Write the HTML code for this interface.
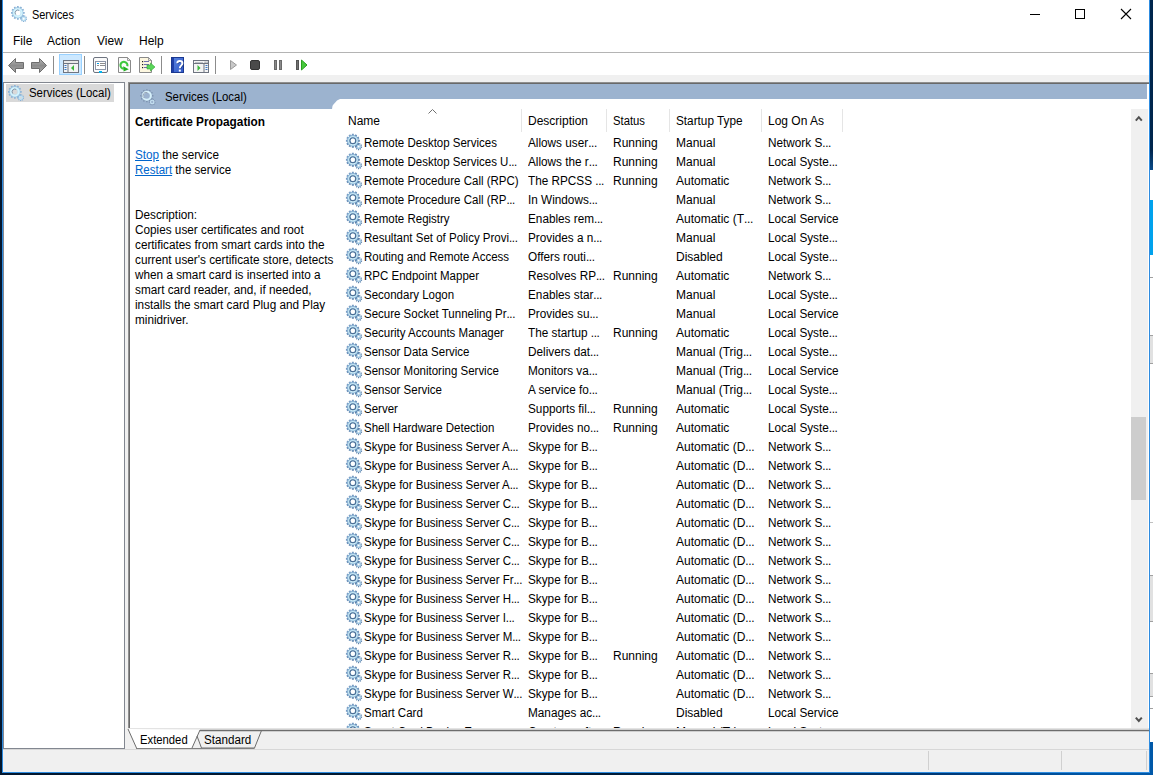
<!DOCTYPE html>
<html><head><meta charset="utf-8">
<style>
*{margin:0;padding:0;box-sizing:border-box}
html,body{width:1153px;height:775px;overflow:hidden;background:#fff;font-family:"Liberation Sans",sans-serif;color:#000}
.a{position:absolute}
.t{position:absolute;white-space:nowrap;font-size:12px;line-height:14px;transform-origin:0 0}
.row{position:absolute;left:0;width:1130px;height:19px}
.row .c{position:absolute;top:3px;font-size:12px;line-height:14px;white-space:nowrap;transform:scaleX(.95);transform-origin:0 0}
.row .c.n{transform:scaleX(.958)}
.row .c.d{transform:scaleX(.98)}
.row .c.s,.row .c.u{transform:none}
.row .c.l{transform:scaleX(.98)}
.gi{position:absolute;top:1px}
.row i{font-style:normal;letter-spacing:-0.4px}
svg{display:block;overflow:visible}
</style></head><body>
<svg width="0" height="0" style="position:absolute">
<defs>
<radialGradient id="gg" cx="0.5" cy="0.5" r="0.5">
<stop offset="0.45" stop-color="#a0cbe8"/><stop offset="0.7" stop-color="#d4f3fd"/><stop offset="1" stop-color="#89b4d6"/>
</radialGradient>
<linearGradient id="gt" x1="0" y1="0" x2="1" y2="1"><stop offset="0" stop-color="#86aad0"/><stop offset="1" stop-color="#48709c"/></linearGradient>
<radialGradient id="gp" cx="0.5" cy="0.5" r="0.5">
<stop offset="0.5" stop-color="#bde4f6"/><stop offset="0.75" stop-color="#d8f6fe"/><stop offset="1" stop-color="#a6d0ea"/>
</radialGradient>
<g id="gear">
<path d="M15.20,12.56 L16.20,12.69 L15.95,13.92 L14.98,13.65 L14.62,14.24 L15.30,14.98 L14.32,15.76 L13.75,14.93 L13.09,15.15 L13.13,16.16 L11.88,16.13 L11.98,15.12 L11.34,14.87 L10.72,15.67 L9.78,14.84 L10.50,14.13 L10.17,13.53 L9.19,13.74 L9.00,12.51 L10.01,12.43 L10.14,11.75 L9.25,11.28 L9.90,10.22 L10.73,10.80 L11.26,10.37 L10.88,9.44 L12.07,9.04 L12.32,10.01 L13.01,10.03 L13.32,9.07 L14.48,9.53 L14.05,10.44 L14.56,10.90 L15.42,10.36 L16.01,11.46 L15.10,11.88Z" fill="#5f83ab"/>
<circle cx="12.6" cy="12.6" r="2.5" fill="#a9cde6"/>
<circle cx="12.6" cy="12.6" r="1.0" fill="#fff"/>
<path d="M12.36,5.82 L13.78,5.80 L13.78,7.80 L12.36,7.78 L12.11,8.71 L13.35,9.39 L12.35,11.13 L11.14,10.40 L10.45,11.09 L11.18,12.30 L9.44,13.30 L8.76,12.06 L7.83,12.31 L7.85,13.73 L5.85,13.73 L5.87,12.31 L4.94,12.06 L4.26,13.30 L2.52,12.30 L3.25,11.09 L2.56,10.40 L1.35,11.13 L0.35,9.39 L1.59,8.71 L1.34,7.78 L-0.08,7.80 L-0.08,5.80 L1.34,5.82 L1.59,4.89 L0.35,4.21 L1.35,2.47 L2.56,3.20 L3.25,2.51 L2.52,1.30 L4.26,0.30 L4.94,1.54 L5.87,1.29 L5.85,-0.13 L7.85,-0.13 L7.83,1.29 L8.76,1.54 L9.44,0.30 L11.18,1.30 L10.45,2.51 L11.14,3.20 L12.35,2.47 L13.35,4.21 L12.11,4.89Z" fill="url(#gt)"/>
<circle cx="6.85" cy="6.8" r="5.6" fill="url(#gg)"/>
<circle cx="6.85" cy="6.8" r="2.9" fill="none" stroke="#4d7097" stroke-width="1.3"/>
<circle cx="6.85" cy="6.8" r="2.2" fill="#fff"/>
</g>
<g id="gearL">
<path d="M15.30,12.66 L16.10,12.79 L15.86,13.94 L15.08,13.75 L14.72,14.34 L15.25,14.95 L14.32,15.69 L13.85,15.03 L13.19,15.25 L13.20,16.06 L12.02,16.03 L12.08,15.22 L11.44,14.97 L10.93,15.60 L10.04,14.82 L10.60,14.23 L10.27,13.63 L9.48,13.78 L9.30,12.61 L10.11,12.53 L10.24,11.85 L9.54,11.46 L10.15,10.45 L10.83,10.90 L11.36,10.47 L11.08,9.71 L12.20,9.34 L12.42,10.11 L13.11,10.13 L13.38,9.37 L14.47,9.80 L14.15,10.54 L14.66,11.00 L15.36,10.58 L15.92,11.62 L15.20,11.98Z" fill="#86b0d6"/>
<circle cx="12.7" cy="12.7" r="2.4" fill="#c0e2f4"/>
<path d="M12.28,5.94 L13.70,5.94 L13.70,7.66 L12.28,7.66 L11.98,8.77 L13.21,9.47 L12.35,10.97 L11.12,10.26 L10.31,11.07 L11.02,12.30 L9.52,13.16 L8.82,11.93 L7.71,12.23 L7.71,13.65 L5.99,13.65 L5.99,12.23 L4.88,11.93 L4.18,13.16 L2.68,12.30 L3.39,11.07 L2.58,10.26 L1.35,10.97 L0.49,9.47 L1.72,8.77 L1.42,7.66 L0.00,7.66 L0.00,5.94 L1.42,5.94 L1.72,4.83 L0.49,4.13 L1.35,2.63 L2.58,3.34 L3.39,2.53 L2.68,1.30 L4.18,0.44 L4.88,1.67 L5.99,1.37 L5.99,-0.05 L7.71,-0.05 L7.71,1.37 L8.82,1.67 L9.52,0.44 L11.02,1.30 L10.31,2.53 L11.12,3.34 L12.35,2.63 L13.21,4.13 L11.98,4.83Z" fill="#8cb3d6"/>
<circle cx="6.85" cy="6.8" r="5.4" fill="url(#gp)"/>
</g>
</defs>
</svg>

<!-- window borders -->
<div class="a" style="left:0;top:0;width:2px;height:775px;background:#03172e"></div>
<div class="a" style="left:2px;top:0;width:1px;height:775px;background:#2e8ce0"></div>
<div class="a" style="left:1149px;top:0;width:1px;height:775px;background:#2e8ce0"></div>
<div class="a" style="left:1150px;top:0;width:3px;height:170px;background:linear-gradient(#00264d 0,#00264d 150px,#0a4a88 170px)"></div>
<div class="a" style="left:1150px;top:200px;width:3px;height:55px;background:#00a2ed"></div>
<div class="a" style="left:1150px;top:277px;width:3px;height:1px;background:#a0a0a0"></div>
<div class="a" style="left:1150px;top:335px;width:3px;height:29px;background:#e1e1e1;border-top:1px solid #a0a0a0;border-bottom:1px solid #a0a0a0"></div>
<div class="a" style="left:1150px;top:522px;width:3px;height:1px;background:#c0c0c0"></div>
<div class="a" style="left:1150px;top:575px;width:3px;height:47px;background:#e1e1e1;border-top:1px solid #a0a0a0;border-bottom:1px solid #a0a0a0"></div>
<div class="a" style="left:1150px;top:673px;width:3px;height:24px;background:#e1e1e1;border-top:1px solid #a0a0a0;border-bottom:1px solid #a0a0a0"></div>
<div class="a" style="left:1150px;top:708px;width:3px;height:1px;background:#a0a0a0"></div>
<div class="a" style="left:1150px;top:742px;width:3px;height:33px;background:#0a5aa5"></div>

<!-- title bar -->
<svg class="a" style="left:11px;top:6px" width="16" height="16"><use href="#gearL"/><circle cx="6.85" cy="6.8" r="2.6" fill="#fff"/><circle cx="12.7" cy="12.7" r="1.0" fill="#fff"/><path d="M4.78,8.54 A2.7,2.7 0 0 1 8.2,4.46" fill="none" stroke="#6a7486" stroke-width="0.7"/></svg>
<div class="t" style="left:32px;top:8px;transform:scaleX(.91)">Services</div>
<!-- caption buttons -->
<div class="a" style="left:1030px;top:14px;width:10px;height:1px;background:#000"></div>
<div class="a" style="left:1075px;top:9px;width:10px;height:10px;border:1px solid #000"></div>
<svg class="a" style="left:1121px;top:9px" width="10" height="10"><path d="M0,0L10,10M10,0L0,10" stroke="#000" stroke-width="1.1"/></svg>

<!-- menu -->
<div class="t" style="left:13px;top:34px">File</div>
<div class="t" style="left:47px;top:34px">Action</div>
<div class="t" style="left:97px;top:34px">View</div>
<div class="t" style="left:139px;top:34px">Help</div>
<div class="a" style="left:3px;top:52px;width:1146px;height:1px;background:#b4b4b4"></div>

<!-- toolbar -->
<svg class="a" style="left:0;top:53px" width="320" height="22">
<defs>
<linearGradient id="ag" x1="0" y1="0" x2="0" y2="1"><stop offset="0" stop-color="#b8b8b8"/><stop offset="0.5" stop-color="#8c8c8c"/><stop offset="1" stop-color="#a8a8a8"/></linearGradient>
<linearGradient id="hg" x1="0" y1="0" x2="1" y2="1"><stop offset="0" stop-color="#5b86e0"/><stop offset="1" stop-color="#2f57c8"/></linearGradient>
</defs>
<!-- back arrow -->
<path d="M8.5,12.5 L15.5,5.5 L15.5,9.5 L23.5,9.5 L23.5,15.5 L15.5,15.5 L15.5,19.5 Z" fill="url(#ag)" stroke="#6e6e6e" stroke-width="1" stroke-linejoin="round"/>
<!-- forward arrow -->
<path d="M46.5,12.5 L39.5,5.5 L39.5,9.5 L31.5,9.5 L31.5,15.5 L39.5,15.5 L39.5,19.5 Z" fill="url(#ag)" stroke="#6e6e6e" stroke-width="1" stroke-linejoin="round"/>
<rect x="53" y="3" width="1" height="18" fill="#8c8c8c"/>
<!-- highlighted button -->
<rect x="59.5" y="1.5" width="22" height="20" fill="#cce8ff" stroke="#99d1ff" stroke-width="1"/>
<rect x="63.5" y="7.5" width="15" height="12" fill="#f4f4f4" stroke="#6e7480" stroke-width="1"/>
<rect x="64" y="8" width="14" height="2" fill="#e8e8e8"/>
<rect x="64" y="10" width="14" height="1" fill="#6e7480"/>
<rect x="67.5" y="11" width="1" height="8" fill="#6e7480"/>
<rect x="64.5" y="12" width="2" height="1" fill="#3a78c8"/><rect x="64.5" y="14" width="2" height="1" fill="#3a78c8"/><rect x="64.5" y="16" width="2" height="1" fill="#3a78c8"/>
<path d="M74,12 L71,15 L74,18 Z" fill="#3cb83c"/>
<rect x="84" y="3" width="1" height="18" fill="#8c8c8c"/>
<!-- properties -->
<rect x="93.5" y="4.5" width="14" height="15" rx="1.5" fill="#fafafa" stroke="#6e7480" stroke-width="1"/>
<rect x="95.5" y="8.5" width="10" height="8" fill="#fff" stroke="#8d96a8" stroke-width="1"/>
<rect x="97" y="10" width="2" height="1" fill="#00a0e8"/><rect x="100" y="10" width="5" height="1" fill="#8d8d8d"/>
<rect x="97" y="12" width="2" height="1" fill="#8d8d8d"/><rect x="100" y="12" width="5" height="1" fill="#8d8d8d"/>
<rect x="99" y="18" width="3" height="2" fill="#00b4f0"/>
<!-- refresh -->
<path d="M118.5,4.5 L127.5,4.5 L130.5,7.5 L130.5,19.5 L118.5,19.5 Z" fill="#fbfbfb" stroke="#8a8a8a" stroke-width="1"/>
<path d="M127.5,7.5 L127.5,4.5 L130.5,7.5 Z" fill="#e8e8e8" stroke="#8a8a8a" stroke-width="0.8"/>
<path d="M127.3,13.3 A3.5,3.5 0 1 0 123.6,15.8" fill="none" stroke="#3ec83e" stroke-width="2.1"/>
<path d="M123.2,13.2 L128.8,16.2 L123.6,18.6 Z" fill="#22b022"/>
<!-- export list -->
<path d="M139.5,4.5 L148.5,4.5 L151.5,7.5 L151.5,19.5 L139.5,19.5 Z" fill="#fdf7e0" stroke="#8a8a8a" stroke-width="1"/>
<path d="M148.5,7.5 L148.5,4.5 L151.5,7.5 Z" fill="#e8e8e8" stroke="#8a8a8a" stroke-width="0.8"/>
<rect x="142" y="8" width="1.2" height="1.2" fill="#222"/><rect x="144" y="8" width="5" height="1" fill="#7070b0"/>
<rect x="142" y="11" width="1.2" height="1.2" fill="#222"/><rect x="144" y="11" width="5" height="1" fill="#7070b0"/>
<rect x="142" y="14" width="1.2" height="1.2" fill="#222"/><rect x="144" y="14" width="5" height="1" fill="#7070b0"/>
<path d="M147,12 L150.5,12 L150.5,10 L155,14 L150.5,18 L150.5,16 L147,16 Z" fill="#5ad65a" stroke="#34a834" stroke-width="0.6"/>
<rect x="161" y="3" width="1" height="18" fill="#8c8c8c"/>
<!-- help -->
<rect x="171" y="4" width="13" height="16" fill="url(#hg)"/>
<rect x="171" y="4" width="3" height="16" fill="#1f3fa8"/>
<rect x="171.5" y="4.5" width="12" height="15" fill="none" stroke="#1a3890" stroke-width="1"/>
<path d="M177.3,10.2 C177.3,7.2 182.4,7.2 182.4,10.2 C182.4,12.6 179.8,12.6 179.8,15.2" fill="none" stroke="#1d3c8a" stroke-width="1.9" transform="translate(0.6,0.5)"/><path d="M177.3,10.2 C177.3,7.2 182.4,7.2 182.4,10.2 C182.4,12.6 179.8,12.6 179.8,15.2" fill="none" stroke="#fff" stroke-width="1.9"/><rect x="178.8" y="16.6" width="2" height="2" fill="#fff"/>
<!-- action pane -->
<rect x="193.5" y="7.5" width="15" height="12" fill="#f4f4f4" stroke="#6e7480" stroke-width="1"/><rect x="195" y="9" width="8" height="0.8" fill="#b0b4bc"/><rect x="204.5" y="8.6" width="1.2" height="1.2" fill="#8a8f9a"/><rect x="206.5" y="8.6" width="1.2" height="1.2" fill="#8a8f9a"/>
<rect x="194" y="10" width="14" height="1" fill="#6e7480"/>
<rect x="203.5" y="11" width="1" height="8" fill="#6e7480"/>
<rect x="205.5" y="12" width="2" height="1" fill="#3a78c8"/><rect x="205.5" y="14" width="2" height="1" fill="#3a78c8"/><rect x="205.5" y="16" width="2" height="1" fill="#3a78c8"/>
<path d="M197.5,12 L200.5,15 L197.5,18 Z" fill="#3cb83c"/>
<rect x="215" y="3" width="1" height="18" fill="#8c8c8c"/>
<!-- play disabled -->
<path d="M230.5,7.5 L236.5,12 L230.5,16.5 Z" fill="#c8c8c8" stroke="#9a9a9a" stroke-width="1" stroke-linejoin="round"/>
<!-- stop -->
<rect x="250.5" y="7.5" width="9" height="9" rx="1.5" fill="#4a4a4a" stroke="#333" stroke-width="1"/>
<!-- pause -->
<rect x="274.5" y="7.5" width="2" height="9" fill="#8a8a8a" stroke="#6a6a6a" stroke-width="1"/>
<rect x="279.5" y="7.5" width="2" height="9" fill="#8a8a8a" stroke="#6a6a6a" stroke-width="1"/>
<!-- restart -->
<rect x="296.5" y="7.5" width="2" height="9" fill="#707070" stroke="#555" stroke-width="1"/>
<path d="M301.5,7 L307,12 L301.5,17 Z" fill="#46c83c" stroke="#2aa020" stroke-width="1" stroke-linejoin="round"/>
</svg>

<div class="a" style="left:3px;top:75px;width:1146px;height:7px;background:#f0f0f0"></div>

<!-- left pane -->
<div class="a" style="left:3px;top:82px;width:122px;height:667px;background:#fff;border:1px solid #828790"></div>
<div class="a" style="left:6px;top:84px;width:108px;height:18px;background:#d9d9d9"></div>
<svg class="a" style="left:8px;top:85px" width="16" height="16"><use href="#gearL"/><circle cx="6.85" cy="6.8" r="2.6" fill="#d9d9d9"/><circle cx="12.7" cy="12.7" r="1.0" fill="#d9d9d9"/><path d="M4.78,8.54 A2.7,2.7 0 0 1 8.2,4.46" fill="none" stroke="#6a7486" stroke-width="0.7"/></svg>
<div class="t" style="left:29px;top:86px;transform:scaleX(.95)">Services (Local)</div>
<div class="a" style="left:125px;top:82px;width:3px;height:667px;background:#f0f0f0"></div>

<!-- right pane -->
<div class="a" style="left:128px;top:82px;width:1021px;height:1px;background:#8f8f8f"></div>
<div class="a" style="left:128px;top:82px;width:1px;height:646px;background:#8f8f8f"></div>
<div class="a" style="left:129px;top:83px;width:1020px;height:1px;background:#696969"></div>
<div class="a" style="left:129px;top:83px;width:1px;height:645px;background:#696969"></div>
<div class="a" style="left:130px;top:84px;width:1017px;height:25px;background:#9cb3cf"></div>
<div class="a" style="left:332px;top:99px;width:815px;height:10px;background:#fff;clip-path:polygon(0 10px,0.5px 7px,1px 6px,5px 1.5px,8px 0,100% 0,100% 100%)"></div>
<svg class="a" style="left:140px;top:89px" width="16" height="16"><path d="M12.10,6.08 L13.41,6.11 L13.41,7.49 L12.10,7.52 L11.76,8.80 L12.88,9.48 L12.19,10.68 L11.04,10.05 L10.10,10.99 L10.73,12.14 L9.53,12.83 L8.85,11.71 L7.57,12.05 L7.54,13.36 L6.16,13.36 L6.13,12.05 L4.85,11.71 L4.17,12.83 L2.97,12.14 L3.60,10.99 L2.66,10.05 L1.51,10.68 L0.82,9.48 L1.94,8.80 L1.60,7.52 L0.29,7.49 L0.29,6.11 L1.60,6.08 L1.94,4.80 L0.82,4.12 L1.51,2.92 L2.66,3.55 L3.60,2.61 L2.97,1.46 L4.17,0.77 L4.85,1.89 L6.13,1.55 L6.16,0.24 L7.54,0.24 L7.57,1.55 L8.85,1.89 L9.53,0.77 L10.73,1.46 L10.10,2.61 L11.04,3.55 L12.19,2.92 L12.88,4.12 L11.76,4.80Z" fill="#7a90ad"/><circle cx="6.85" cy="6.8" r="5.3" fill="#9cb3cf"/><circle cx="6.85" cy="6.8" r="4.0" fill="none" stroke="#d6f0fa" stroke-width="2"/><path d="M4.6,9.2 A3,3 0 0 1 7.5,3.8" fill="none" stroke="#7a7f90" stroke-width="0.7"/><path d="M14.70,13.00 L15.60,13.15 L15.39,14.19 L14.50,13.97 L14.11,14.61 L14.71,15.30 L13.88,15.96 L13.34,15.22 L12.63,15.46 L12.65,16.37 L11.58,16.34 L11.64,15.44 L10.95,15.16 L10.38,15.87 L9.58,15.16 L10.21,14.51 L9.85,13.85 L8.96,14.02 L8.80,12.97 L9.70,12.88 L9.85,12.14 L9.06,11.70 L9.61,10.79 L10.37,11.30 L10.95,10.83 L10.63,9.99 L11.64,9.65 L11.89,10.52 L12.64,10.54 L12.93,9.68 L13.92,10.07 L13.56,10.90 L14.12,11.40 L14.90,10.93 L15.40,11.86 L14.59,12.26Z" fill="#7a90ad"/><circle cx="12.2" cy="13.0" r="2.5" fill="#9cb3cf"/><circle cx="12.2" cy="13.0" r="1.7" fill="none" stroke="#c6e2f2" stroke-width="1.1"/></svg>
<div class="t" style="left:165px;top:90px;transform:scaleX(.95)">Services (Local)</div>

<div class="t" style="left:135px;top:115px;font-weight:bold;transform:scaleX(.985)">Certificate Propagation</div>
<div class="t" style="left:135px;top:148px;transform:scaleX(.975)"><span style="color:#0066cc;text-decoration:underline">Stop</span> the service</div>
<div class="t" style="left:135px;top:163px;transform:scaleX(.96)"><span style="color:#0066cc;text-decoration:underline">Restart</span> the service</div>
<div class="t" style="left:135px;top:208px;line-height:15px;transform:scaleX(.98)">Description:<br>Copies user certificates and root<br>certificates from smart cards into the<br>current user's certificate store, detects<br>when a smart card is inserted into a<br>smart card reader, and, if needed,<br>installs the smart card Plug and Play<br>minidriver.</div>

<!-- list header -->
<div class="t" style="left:348px;top:114px">Name</div>
<svg class="a" style="left:428px;top:109px" width="9" height="5"><path d="M0.5,4.5L4.5,0.5L8.5,4.5" fill="none" stroke="#707070" stroke-width="1"/></svg>
<div class="a" style="left:521px;top:109px;width:1px;height:23px;background:#e5e5e5"></div>
<div class="t" style="left:528px;top:114px">Description</div>
<div class="a" style="left:606px;top:109px;width:1px;height:23px;background:#e5e5e5"></div>
<div class="t" style="left:613px;top:114px;transform:scaleX(.94)">Status</div>
<div class="a" style="left:669px;top:109px;width:1px;height:23px;background:#e5e5e5"></div>
<div class="t" style="left:676px;top:114px;transform:scaleX(.98)">Startup Type</div>
<div class="a" style="left:761px;top:109px;width:1px;height:23px;background:#e5e5e5"></div>
<div class="t" style="left:768px;top:114px">Log On As</div>
<div class="a" style="left:842px;top:109px;width:1px;height:23px;background:#e5e5e5"></div>

<!-- rows (clipped) -->
<div class="a" style="left:130px;top:132px;width:1001px;height:596px;overflow:hidden">
<div class="a" style="left:-130px;top:-132px;width:1153px;height:775px">
<div class="row" style="top:133px"><svg class="gi" style="left:346px" width="16" height="16"><use href="#gear"/></svg><span class="c n" style="left:364px">Remote Desktop Services</span><span class="c d" style="left:528px">Allows user<i>...</i></span><span class="c s" style="left:613px">Running</span><span class="c u" style="left:676px">Manual</span><span class="c l" style="left:768px">Network S<i>...</i></span></div>
<div class="row" style="top:152px"><svg class="gi" style="left:346px" width="16" height="16"><use href="#gear"/></svg><span class="c n" style="left:364px">Remote Desktop Services U<i>...</i></span><span class="c d" style="left:528px">Allows the r<i>...</i></span><span class="c s" style="left:613px">Running</span><span class="c u" style="left:676px">Manual</span><span class="c l" style="left:768px">Local Syste<i>...</i></span></div>
<div class="row" style="top:171px"><svg class="gi" style="left:346px" width="16" height="16"><use href="#gear"/></svg><span class="c n" style="left:364px">Remote Procedure Call (RPC)</span><span class="c d" style="left:528px">The RPCSS <i>...</i></span><span class="c s" style="left:613px">Running</span><span class="c u" style="left:676px">Automatic</span><span class="c l" style="left:768px">Network S<i>...</i></span></div>
<div class="row" style="top:190px"><svg class="gi" style="left:346px" width="16" height="16"><use href="#gear"/></svg><span class="c n" style="left:364px">Remote Procedure Call (RP<i>...</i></span><span class="c d" style="left:528px">In Windows<i>...</i></span><span class="c u" style="left:676px">Manual</span><span class="c l" style="left:768px">Network S<i>...</i></span></div>
<div class="row" style="top:209px"><svg class="gi" style="left:346px" width="16" height="16"><use href="#gear"/></svg><span class="c n" style="left:364px">Remote Registry</span><span class="c d" style="left:528px">Enables rem<i>...</i></span><span class="c u" style="left:676px">Automatic (T<i>...</i></span><span class="c l" style="left:768px">Local Service</span></div>
<div class="row" style="top:228px"><svg class="gi" style="left:346px" width="16" height="16"><use href="#gear"/></svg><span class="c n" style="left:364px">Resultant Set of Policy Provi<i>...</i></span><span class="c d" style="left:528px">Provides a n<i>...</i></span><span class="c u" style="left:676px">Manual</span><span class="c l" style="left:768px">Local Syste<i>...</i></span></div>
<div class="row" style="top:247px"><svg class="gi" style="left:346px" width="16" height="16"><use href="#gear"/></svg><span class="c n" style="left:364px">Routing and Remote Access</span><span class="c d" style="left:528px">Offers routi<i>...</i></span><span class="c u" style="left:676px">Disabled</span><span class="c l" style="left:768px">Local Syste<i>...</i></span></div>
<div class="row" style="top:266px"><svg class="gi" style="left:346px" width="16" height="16"><use href="#gear"/></svg><span class="c n" style="left:364px">RPC Endpoint Mapper</span><span class="c d" style="left:528px">Resolves RP<i>...</i></span><span class="c s" style="left:613px">Running</span><span class="c u" style="left:676px">Automatic</span><span class="c l" style="left:768px">Network S<i>...</i></span></div>
<div class="row" style="top:285px"><svg class="gi" style="left:346px" width="16" height="16"><use href="#gear"/></svg><span class="c n" style="left:364px">Secondary Logon</span><span class="c d" style="left:528px">Enables star<i>...</i></span><span class="c u" style="left:676px">Manual</span><span class="c l" style="left:768px">Local Syste<i>...</i></span></div>
<div class="row" style="top:304px"><svg class="gi" style="left:346px" width="16" height="16"><use href="#gear"/></svg><span class="c n" style="left:364px">Secure Socket Tunneling Pr<i>...</i></span><span class="c d" style="left:528px">Provides su<i>...</i></span><span class="c u" style="left:676px">Manual</span><span class="c l" style="left:768px">Local Service</span></div>
<div class="row" style="top:323px"><svg class="gi" style="left:346px" width="16" height="16"><use href="#gear"/></svg><span class="c n" style="left:364px">Security Accounts Manager</span><span class="c d" style="left:528px">The startup <i>...</i></span><span class="c s" style="left:613px">Running</span><span class="c u" style="left:676px">Automatic</span><span class="c l" style="left:768px">Local Syste<i>...</i></span></div>
<div class="row" style="top:342px"><svg class="gi" style="left:346px" width="16" height="16"><use href="#gear"/></svg><span class="c n" style="left:364px">Sensor Data Service</span><span class="c d" style="left:528px">Delivers dat<i>...</i></span><span class="c u" style="left:676px">Manual (Trig<i>...</i></span><span class="c l" style="left:768px">Local Syste<i>...</i></span></div>
<div class="row" style="top:361px"><svg class="gi" style="left:346px" width="16" height="16"><use href="#gear"/></svg><span class="c n" style="left:364px">Sensor Monitoring Service</span><span class="c d" style="left:528px">Monitors va<i>...</i></span><span class="c u" style="left:676px">Manual (Trig<i>...</i></span><span class="c l" style="left:768px">Local Service</span></div>
<div class="row" style="top:380px"><svg class="gi" style="left:346px" width="16" height="16"><use href="#gear"/></svg><span class="c n" style="left:364px">Sensor Service</span><span class="c d" style="left:528px">A service fo<i>...</i></span><span class="c u" style="left:676px">Manual (Trig<i>...</i></span><span class="c l" style="left:768px">Local Syste<i>...</i></span></div>
<div class="row" style="top:399px"><svg class="gi" style="left:346px" width="16" height="16"><use href="#gear"/></svg><span class="c n" style="left:364px">Server</span><span class="c d" style="left:528px">Supports fil<i>...</i></span><span class="c s" style="left:613px">Running</span><span class="c u" style="left:676px">Automatic</span><span class="c l" style="left:768px">Local Syste<i>...</i></span></div>
<div class="row" style="top:418px"><svg class="gi" style="left:346px" width="16" height="16"><use href="#gear"/></svg><span class="c n" style="left:364px">Shell Hardware Detection</span><span class="c d" style="left:528px">Provides no<i>...</i></span><span class="c s" style="left:613px">Running</span><span class="c u" style="left:676px">Automatic</span><span class="c l" style="left:768px">Local Syste<i>...</i></span></div>
<div class="row" style="top:437px"><svg class="gi" style="left:346px" width="16" height="16"><use href="#gear"/></svg><span class="c n" style="left:364px">Skype for Business Server A<i>...</i></span><span class="c d" style="left:528px">Skype for B<i>...</i></span><span class="c u" style="left:676px">Automatic (D<i>...</i></span><span class="c l" style="left:768px">Network S<i>...</i></span></div>
<div class="row" style="top:456px"><svg class="gi" style="left:346px" width="16" height="16"><use href="#gear"/></svg><span class="c n" style="left:364px">Skype for Business Server A<i>...</i></span><span class="c d" style="left:528px">Skype for B<i>...</i></span><span class="c u" style="left:676px">Automatic (D<i>...</i></span><span class="c l" style="left:768px">Network S<i>...</i></span></div>
<div class="row" style="top:475px"><svg class="gi" style="left:346px" width="16" height="16"><use href="#gear"/></svg><span class="c n" style="left:364px">Skype for Business Server A<i>...</i></span><span class="c d" style="left:528px">Skype for B<i>...</i></span><span class="c u" style="left:676px">Automatic (D<i>...</i></span><span class="c l" style="left:768px">Network S<i>...</i></span></div>
<div class="row" style="top:494px"><svg class="gi" style="left:346px" width="16" height="16"><use href="#gear"/></svg><span class="c n" style="left:364px">Skype for Business Server C<i>...</i></span><span class="c d" style="left:528px">Skype for B<i>...</i></span><span class="c u" style="left:676px">Automatic (D<i>...</i></span><span class="c l" style="left:768px">Network S<i>...</i></span></div>
<div class="row" style="top:513px"><svg class="gi" style="left:346px" width="16" height="16"><use href="#gear"/></svg><span class="c n" style="left:364px">Skype for Business Server C<i>...</i></span><span class="c d" style="left:528px">Skype for B<i>...</i></span><span class="c u" style="left:676px">Automatic (D<i>...</i></span><span class="c l" style="left:768px">Network S<i>...</i></span></div>
<div class="row" style="top:532px"><svg class="gi" style="left:346px" width="16" height="16"><use href="#gear"/></svg><span class="c n" style="left:364px">Skype for Business Server C<i>...</i></span><span class="c d" style="left:528px">Skype for B<i>...</i></span><span class="c u" style="left:676px">Automatic (D<i>...</i></span><span class="c l" style="left:768px">Network S<i>...</i></span></div>
<div class="row" style="top:551px"><svg class="gi" style="left:346px" width="16" height="16"><use href="#gear"/></svg><span class="c n" style="left:364px">Skype for Business Server C<i>...</i></span><span class="c d" style="left:528px">Skype for B<i>...</i></span><span class="c u" style="left:676px">Automatic (D<i>...</i></span><span class="c l" style="left:768px">Network S<i>...</i></span></div>
<div class="row" style="top:570px"><svg class="gi" style="left:346px" width="16" height="16"><use href="#gear"/></svg><span class="c n" style="left:364px">Skype for Business Server Fr<i>...</i></span><span class="c d" style="left:528px">Skype for B<i>...</i></span><span class="c u" style="left:676px">Automatic (D<i>...</i></span><span class="c l" style="left:768px">Network S<i>...</i></span></div>
<div class="row" style="top:589px"><svg class="gi" style="left:346px" width="16" height="16"><use href="#gear"/></svg><span class="c n" style="left:364px">Skype for Business Server H<i>...</i></span><span class="c d" style="left:528px">Skype for B<i>...</i></span><span class="c u" style="left:676px">Automatic (D<i>...</i></span><span class="c l" style="left:768px">Network S<i>...</i></span></div>
<div class="row" style="top:608px"><svg class="gi" style="left:346px" width="16" height="16"><use href="#gear"/></svg><span class="c n" style="left:364px">Skype for Business Server I<i>...</i></span><span class="c d" style="left:528px">Skype for B<i>...</i></span><span class="c u" style="left:676px">Automatic (D<i>...</i></span><span class="c l" style="left:768px">Network S<i>...</i></span></div>
<div class="row" style="top:627px"><svg class="gi" style="left:346px" width="16" height="16"><use href="#gear"/></svg><span class="c n" style="left:364px">Skype for Business Server M<i>...</i></span><span class="c d" style="left:528px">Skype for B<i>...</i></span><span class="c u" style="left:676px">Automatic (D<i>...</i></span><span class="c l" style="left:768px">Network S<i>...</i></span></div>
<div class="row" style="top:646px"><svg class="gi" style="left:346px" width="16" height="16"><use href="#gear"/></svg><span class="c n" style="left:364px">Skype for Business Server R<i>...</i></span><span class="c d" style="left:528px">Skype for B<i>...</i></span><span class="c s" style="left:613px">Running</span><span class="c u" style="left:676px">Automatic (D<i>...</i></span><span class="c l" style="left:768px">Network S<i>...</i></span></div>
<div class="row" style="top:665px"><svg class="gi" style="left:346px" width="16" height="16"><use href="#gear"/></svg><span class="c n" style="left:364px">Skype for Business Server R<i>...</i></span><span class="c d" style="left:528px">Skype for B<i>...</i></span><span class="c u" style="left:676px">Automatic (D<i>...</i></span><span class="c l" style="left:768px">Network S<i>...</i></span></div>
<div class="row" style="top:684px"><svg class="gi" style="left:346px" width="16" height="16"><use href="#gear"/></svg><span class="c n" style="left:364px">Skype for Business Server W<i>...</i></span><span class="c d" style="left:528px">Skype for B<i>...</i></span><span class="c u" style="left:676px">Automatic (D<i>...</i></span><span class="c l" style="left:768px">Network S<i>...</i></span></div>
<div class="row" style="top:703px"><svg class="gi" style="left:346px" width="16" height="16"><use href="#gear"/></svg><span class="c n" style="left:364px">Smart Card</span><span class="c d" style="left:528px">Manages ac<i>...</i></span><span class="c u" style="left:676px">Disabled</span><span class="c l" style="left:768px">Local Service</span></div>
<div class="row" style="top:722px"><svg class="gi" style="left:346px" width="16" height="16"><use href="#gear"/></svg><span class="c n" style="left:364px">Smart Card Device Enum<i>...</i></span><span class="c d" style="left:528px">Creates soft<i>...</i></span><span class="c s" style="left:613px">Running</span><span class="c u" style="left:676px">Manual (Trig<i>...</i></span><span class="c l" style="left:768px">Local Syste<i>...</i></span></div>
</div></div>

<!-- scrollbar -->
<div class="a" style="left:1131px;top:109px;width:17px;height:619px;background:#f0f0f0"></div>
<svg class="a" style="left:1135px;top:115px" width="8" height="6"><path d="M0.8,5.6L3.8,2.2L6.8,5.6" fill="none" stroke="#505050" stroke-width="2"/></svg>
<div class="a" style="left:1131px;top:417px;width:15px;height:83px;background:#cdcdcd"></div>
<svg class="a" style="left:1135px;top:717px" width="8" height="6"><path d="M0.8,0.6L3.8,4L6.8,0.6" fill="none" stroke="#505050" stroke-width="2"/></svg>

<!-- bottom lines / tabs -->
<div class="a" style="left:128px;top:728px;width:1021px;height:1px;background:#e3e3e3"></div>
<div class="a" style="left:3px;top:729px;width:1146px;height:20px;background:#f0f0f0"></div>
<div class="a" style="left:3px;top:729px;width:122px;height:20px;background:#fff;border-left:1px solid #828790;border-right:1px solid #828790;border-bottom:1px solid #828790"></div>
<svg class="a" style="left:125px;top:728px" width="1024" height="22">
<path d="M75,2.5 L1024,2.5" stroke="#6d6d6d" stroke-width="1.5"/>
<path d="M3,1 L11.5,20 L67,20 L75,2 Z" fill="#fff"/>
<path d="M3,1 L11.5,20 M67,20 L75,2" stroke="#6d6d6d" stroke-width="1" fill="none"/>
<path d="M72,8 L76.5,20 L129.5,20 L136.5,2.5" stroke="#6d6d6d" stroke-width="1" fill="none"/>
<path d="M11,20.5 L129.5,20.5" stroke="#808080" stroke-width="1"/>
</svg>
<div class="t" style="left:140px;top:733px;transform:scaleX(.94)">Extended</div>
<div class="t" style="left:204px;top:733px;transform:scaleX(.97)">Standard</div>

<!-- status bar -->
<div class="a" style="left:3px;top:749px;width:1146px;height:23px;background:#f0f0f0;border-top:1px solid #d7d7d7"></div>
<div class="a" style="left:928px;top:751px;width:1px;height:19px;background:#d0d0d0"></div>
<div class="a" style="left:1061px;top:751px;width:1px;height:19px;background:#d0d0d0"></div>
<div class="a" style="left:1146px;top:751px;width:1px;height:19px;background:#d0d0d0"></div>
<div class="a" style="left:3px;top:772px;width:1147px;height:1px;background:#2e8ce0"></div>
<div class="a" style="left:0;top:773px;width:1153px;height:2px;background:linear-gradient(90deg,#03172e 0,#001a33 600px,#003a78 950px,#0058a8 1100px,#0058a8 1153px)"></div>
<div class="a" style="left:1150px;top:742px;width:3px;height:33px;background:#0058a8"></div>
</body></html>
